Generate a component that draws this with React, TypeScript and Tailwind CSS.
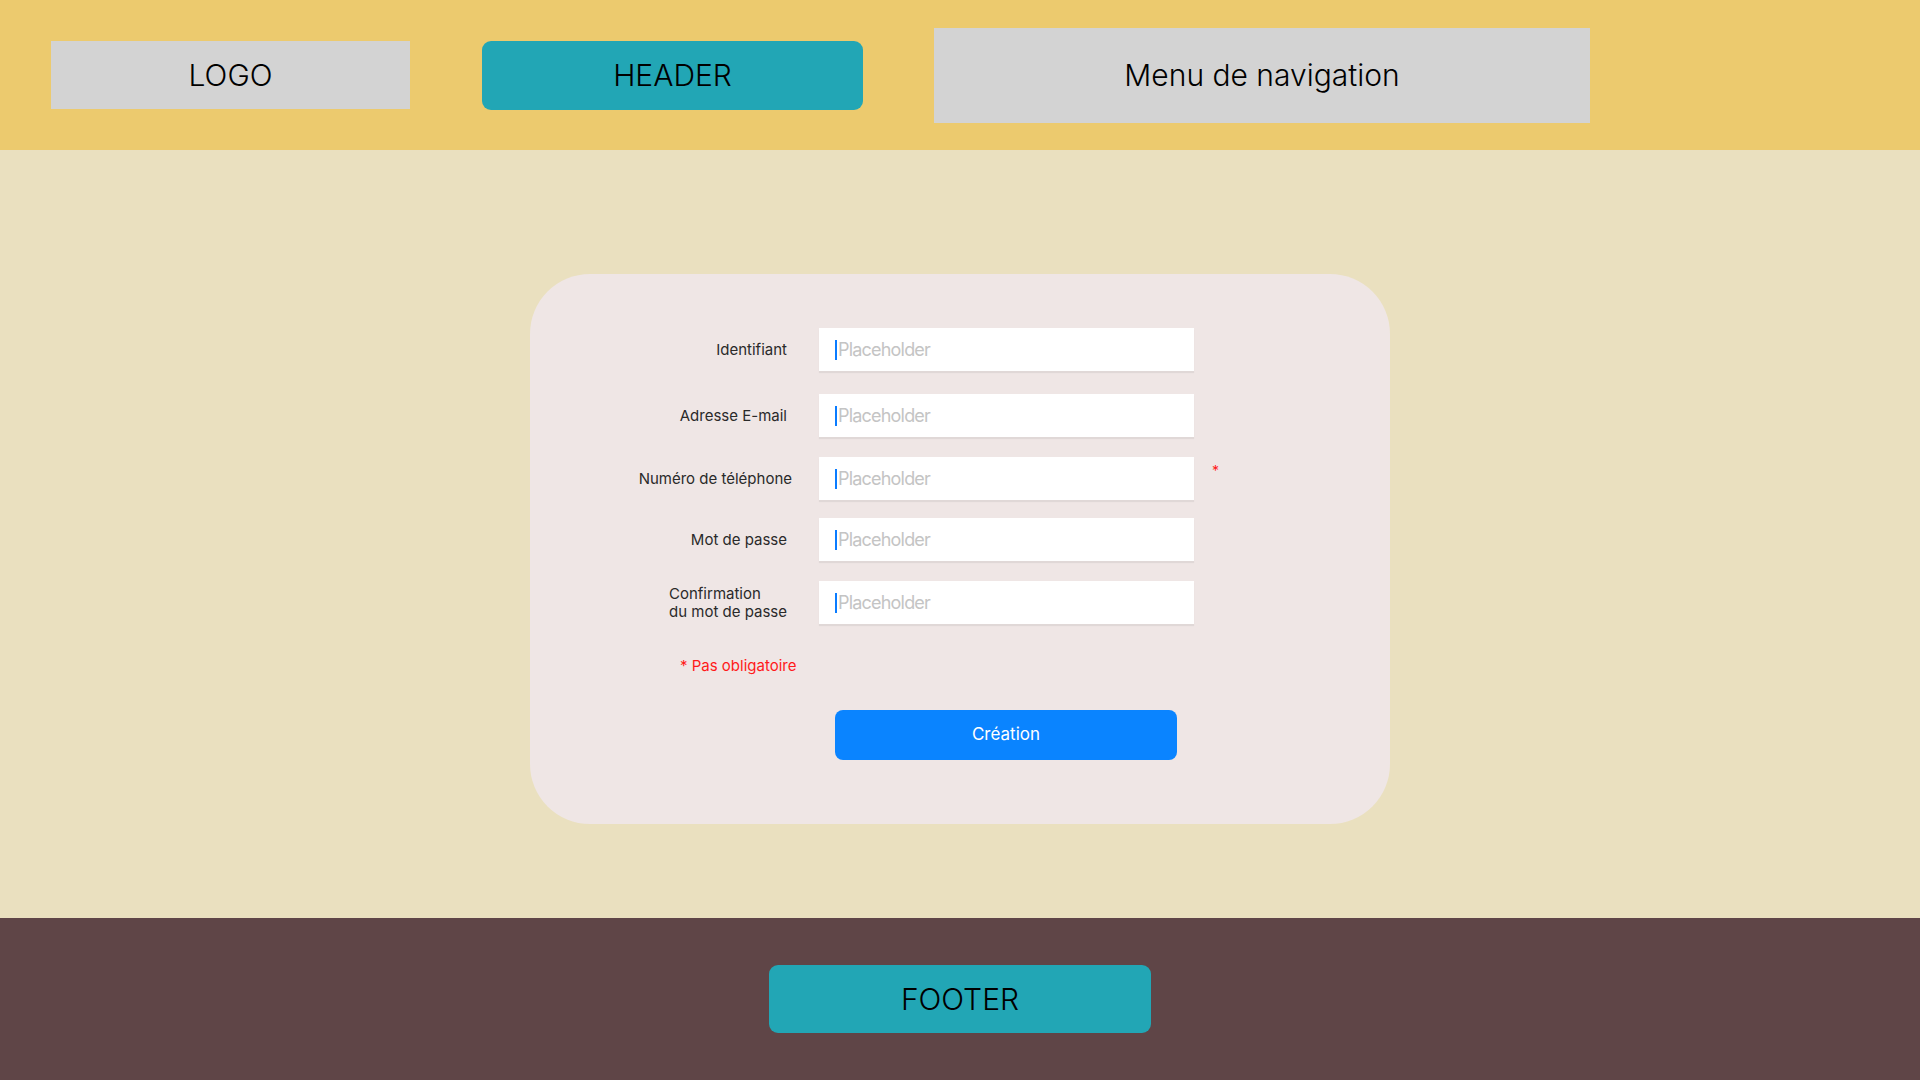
export default function App() {
  const font = { fontFamily: "Inter, 'Noto Sans', sans-serif" };

  const Field = ({ label, star }: { label: React.ReactNode; star?: boolean }) => (
    <div className="flex items-center">
      <div className="w-[257px] flex justify-end text-[15px] text-[#2a2a2a] leading-[18px]">{label}</div>
      <div className="ml-[32px] w-[375px] h-[43px] bg-white shadow-[0_2px_1px_rgba(0,0,0,0.06)] flex items-center pl-[16px]">
        <span className="w-[2px] h-[20px] bg-[#0a7cff]" />
        <span className="ml-[1px] mt-[1px] text-[18px] leading-[20px] tracking-[-0.8px] text-[#c4c4c4]">Placeholder</span>
      </div>
      {star && <span className="self-start ml-[18px] mt-[3px] text-[14px] text-[#ff1a1a]">*</span>}
    </div>
  );

  return (
    <div className="w-[1920px] h-[1080px] flex flex-col" style={font}>
      {/* header */}
      <header className="h-[150px] bg-[#ecca6e] flex items-center pl-[51px] gap-[72px]">
        <div className="w-[359px] h-[68px] bg-[#d3d3d3] flex items-center justify-center text-[30px] font-light text-black">
          LOGO
        </div>
        <div className="w-[381px] h-[69px] bg-[#22a6b5] rounded-[9px] flex items-center justify-center text-[30px] font-light text-black">
          HEADER
        </div>
        <div className="-ml-px w-[656px] h-[95px] bg-[#d3d3d3] flex items-center justify-center text-[30px] font-light text-black">
          Menu de navigation
        </div>
      </header>

      {/* main */}
      <main className="h-[768px] bg-[#eae0bf] flex justify-center pt-[124px]">
        <div className="w-[860px] h-[550px] bg-[#efe6e5] rounded-[60px] pt-[54px]">
          <Field label="Identifiant" />
          <div className="mt-[23px]">
            <Field label="Adresse E-mail" />
          </div>
          <div className="mt-[20px]">
            <Field label={<span className="-mr-[5px]">Numéro de téléphone</span>} star />
          </div>
          <div className="mt-[18px]">
            <Field label="Mot de passe" />
          </div>
          <div className="mt-[20px]">
            <Field
              label={
                <div className="w-[118px] text-left">
                  Confirmation
                  <br />
                  du mot de passe
                </div>
              }
            />
          </div>
          <div className="mt-[33px] pl-[150px] text-[15px] text-[#ff1a1a] leading-[18px]">* Pas obligatoire</div>
          <div className="mt-[35px] pl-[305px]">
            <button className="w-[342px] h-[50px] rounded-[8px] bg-[#0a84ff] text-white text-[17px]">Création</button>
          </div>
        </div>
      </main>

      {/* footer */}
      <footer className="h-[162px] bg-[#5f4547] flex items-center justify-center">
        <div className="w-[382px] h-[68px] bg-[#22a6b5] rounded-[9px] flex items-center justify-center text-[30px] font-light text-black">
          FOOTER
        </div>
      </footer>
    </div>
  );
}
